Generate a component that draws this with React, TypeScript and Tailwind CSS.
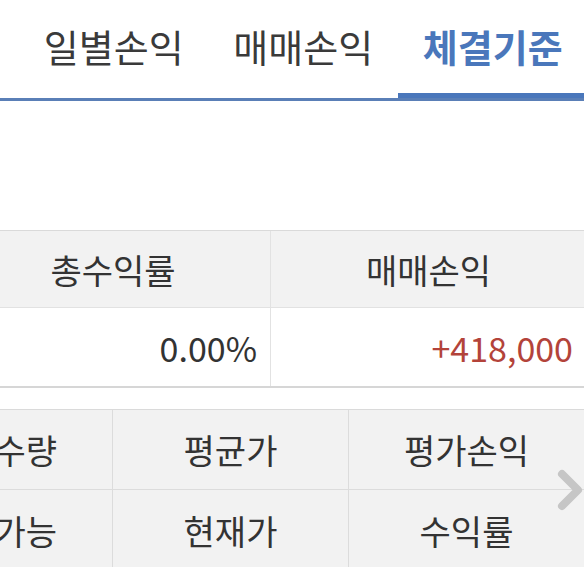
const tabs = ['일별손익', '매매손익', '체결기준']

const FONT = "font-['Noto_Sans_CJK_KR','Noto_Sans',sans-serif]"

export default function App() {
  const activeTab = 2

  return (
    <div className={`h-[567px] w-[584px] overflow-hidden bg-white ${FONT}`}>
      {/* tabs */}
      <div className="flex border-b-[3px] border-[#5a7fb7] pl-[19px]">
        {tabs.map((tab, i) => (
          <div
            key={tab}
            className={
              i === activeTab
                ? 'flex h-[98px] w-[189.5px] shrink-0 items-center justify-center border-b-[5px] border-[#4a77bb] pb-[1px] text-[38px] font-bold text-[#4a77bb]'
                : 'flex h-[98px] w-[189.5px] shrink-0 items-center justify-center border-b-[5px] border-transparent pb-[1px] text-[38px] text-[#3a3a3a]'
            }
          >
            <span className="leading-none">{tab}</span>
          </div>
        ))}
      </div>

      {/* summary */}
      <div className="mt-[129px] -ml-[44px] grid w-[630px] grid-cols-[315px_315px] border-t border-b-2 border-t-[#dadada] border-b-[#d6d6d6] text-[#333]">
        <div className="flex h-[77px] items-center justify-center border-r border-b border-[#e2e2e2] bg-[#f2f2f2] text-[34px]">
          총수익률
        </div>
        <div className="flex h-[77px] items-center justify-center border-b border-[#e2e2e2] bg-[#f2f2f2] text-[34px]">
          매매손익
        </div>
        <div className="flex h-[78px] items-center justify-end border-r border-[#e2e2e2] pr-[13px] text-[34px]">
          0.00%
        </div>
        <div className="flex h-[78px] items-center justify-end pr-[13px] text-[34px] text-[#b3433a]">
          +418,000
        </div>
      </div>

      {/* holdings header */}
      <div className="relative mt-[21px]">
        <div className="-ml-[123px] grid w-[708px] grid-cols-[236px_236px_236px] border-t border-[#dadada] bg-[#f2f2f2] text-[34px] text-[#333]">
          {['보유수량', '평균가', '평가손익', '매도가능', '현재가', '수익률'].map((label, i) => (
            <div
              key={label}
              className={
                i < 3
                  ? 'flex h-[80px] items-center justify-center border-r border-b border-[#dcdcdc] whitespace-nowrap'
                  : 'flex h-[80px] items-center justify-center border-r border-[#dcdcdc] whitespace-nowrap'
              }
            >
              {label}
            </div>
          ))}
        </div>
        <svg
          className="absolute top-[59px] left-[552px]"
          width="32"
          height="44"
          viewBox="0 0 32 44"
          fill="none"
        >
          <polyline
            points="10,6 26,22 10,38"
            stroke="#c6c6c6"
            strokeWidth="8"
            strokeLinecap="round"
            strokeLinejoin="round"
          />
        </svg>
      </div>
    </div>
  )
}
